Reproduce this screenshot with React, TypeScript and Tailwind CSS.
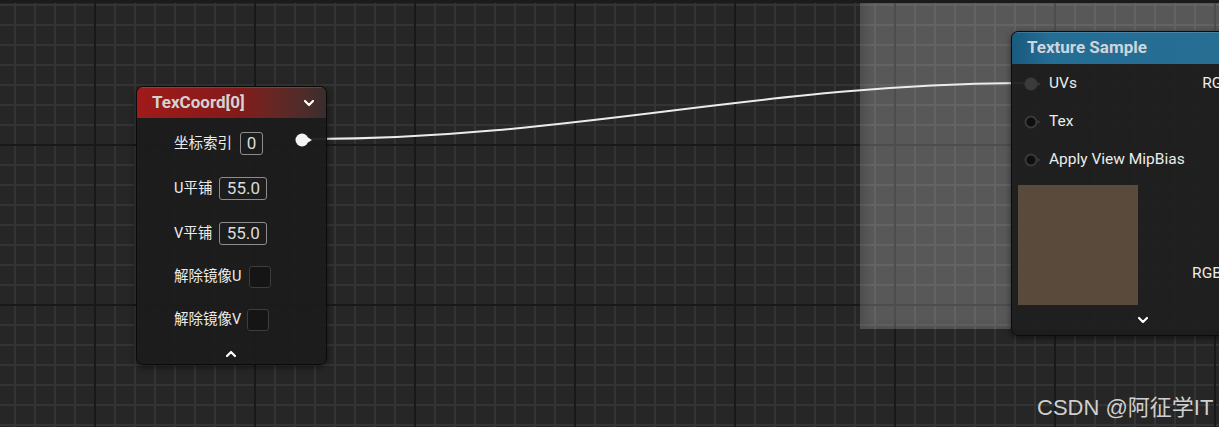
import React from 'react';
import { ChevronDown, ChevronUp } from 'lucide-react';

// --- Pins ---
function OutPin() {
  return (
    <svg width="18" height="14" viewBox="0 0 18 14">
      <circle cx="7" cy="7" r="6.5" fill="#f4f4f4" />
      <polygon points="13,4.5 17,7 13,9.5" fill="#f4f4f4" />
    </svg>
  );
}

function InPin({ connected = false }: { connected?: boolean }) {
  return (
    <svg width="18" height="14" viewBox="0 0 18 14">
      {connected ? (
        <circle cx="7" cy="7" r="6.5" fill="#3b3b3b" />
      ) : (
        <circle cx="7" cy="7" r="5.5" fill="#0e0e0e" stroke="#3a3a3a" strokeWidth="2" />
      )}
      <polygon points="13.5,5 16.5,7 13.5,9" fill={connected ? '#3b3b3b' : '#3a3a3a'} />
    </svg>
  );
}

function ValueBox({ value, wide = false }: { value: string; wide?: boolean }) {
  return (
    <div
      className={`flex h-[23px] items-center justify-center rounded-[3px] border border-[#8d8d8d] text-[17px] leading-none text-[#dcdcdc] ${
        wide ? 'w-[48px]' : 'w-[23px]'
      }`}
    >
      {value}
    </div>
  );
}

function CheckBox() {
  return <div className="h-[22px] w-[22px] rounded-[3px] border border-[#3d3d3d] bg-[#151515]" />;
}

// --- TexCoord node ---
function TexCoordNode() {
  return (
    <div className="absolute left-[136px] top-[86px] flex h-[279px] w-[191px] flex-col overflow-hidden rounded-[7px] border border-[#0b0b0b] bg-[#1b1c1b]/[0.94] shadow-[0_2px_6px_rgba(0,0,0,0.5)]">
      <div className="flex h-[31px] shrink-0 items-center justify-between bg-linear-to-r from-[#a11a1a] via-[#821a1a] via-55% to-[#3a2d2d] pl-[15px] pr-[9px] shadow-[inset_0_1px_0_rgba(255,255,255,0.12)]">
        <span className="text-[17px] font-bold text-[#d3d3d3]">TexCoord[0]</span>
        <ChevronDown size={16} strokeWidth={3.2} className="text-white" />
      </div>

      <div className="flex flex-col pl-[37px] pt-[3px] text-[14.5px] text-[#ececec]">
        <div className="flex h-[45px] items-center gap-[8px]">
          <span>坐标索引</span>
          <ValueBox value="0" />
          <div className="ml-auto mr-[13px] -mt-[7px] flex">
            <OutPin />
          </div>
        </div>
        <div className="flex h-[45px] items-center gap-[7px]">
          <span>U平铺</span>
          <ValueBox value="55.0" wide />
        </div>
        <div className="flex h-[45px] items-center gap-[7px]">
          <span>V平铺</span>
          <ValueBox value="55.0" wide />
        </div>
        <div className="flex h-[42px] items-center gap-[8px]">
          <span>解除镜像U</span>
          <CheckBox />
        </div>
        <div className="flex h-[43px] items-center gap-[6px]">
          <span>解除镜像V</span>
          <CheckBox />
        </div>
      </div>

      <div className="flex flex-1 items-start justify-center pr-[2px] pt-[5px]">
        <ChevronUp size={16} strokeWidth={3.2} className="text-white" />
      </div>
    </div>
  );
}

// --- Texture Sample node ---
const inputs = [
  { label: 'UVs', connected: true },
  { label: 'Tex', connected: false },
  { label: 'Apply View MipBias', connected: false },
];
const outputs = ['RGB', 'R', 'G', 'B', 'A', 'RGBA'];

function TextureSampleNode() {
  return (
    <div className="absolute left-[1011px] top-[31px] flex h-[305px] w-[260px] flex-col overflow-hidden rounded-[7px] border border-[#0b0b0b] bg-[#1b1c1b]/[0.95] shadow-[0_2px_6px_rgba(0,0,0,0.5)]">
      <div className="flex h-[32px] shrink-0 items-center bg-linear-to-r from-[#1a5a7e] via-[#246d95] via-15% to-[#286e92] pl-[15px] shadow-[inset_0_1px_0_rgba(255,255,255,0.15)]">
        <span className="text-[17px] font-bold text-[#cdd5dc]">Texture Sample</span>
      </div>

      <div className="flex flex-1 pt-[1px] text-[15.5px] text-[#ececec]">
        <div className="flex flex-col">
          {inputs.map((p) => (
            <div key={p.label} className="flex h-[38px] items-center gap-[7px] pl-[12px]">
              <InPin connected={p.connected} />
              <span>{p.label}</span>
            </div>
          ))}
          <div className="ml-[6px] mt-[6px] h-[120px] w-[120px] bg-[#5a4a3b]" />
        </div>
        <div className="ml-auto flex flex-col items-end pr-[38px]">
          {outputs.map((o) => (
            <div key={o} className="flex h-[38px] items-center">
              <span>{o}</span>
            </div>
          ))}
        </div>
      </div>

      <div className="flex h-[30px] shrink-0 items-center pl-[123px]">
        <ChevronDown size={16} strokeWidth={3.2} className="text-white" />
      </div>
    </div>
  );
}

export default function App() {
  return (
    <div className="relative h-[427px] w-[1219px] overflow-hidden bg-[#262626] font-[Roboto,'Noto_Sans_CJK_SC',sans-serif]">
      {/* grid */}
      <div className="absolute inset-0 bg-[image:linear-gradient(to_right,#343434_2px,transparent_2px),linear-gradient(to_bottom,#343434_2px,transparent_2px)] bg-[size:20px_20px] bg-[position:14px_4px]" />
      <div className="absolute inset-0 bg-[image:linear-gradient(to_right,#181818_2px,transparent_2px),linear-gradient(to_bottom,#181818_2px,transparent_2px)] bg-[size:160px_160px] bg-[position:94px_144px]" />

      {/* selection marquee */}
      <div className="absolute left-[860px] top-0 h-[329px] w-[400px] bg-white/[0.23] shadow-[inset_5px_-3px_6px_rgba(0,0,0,0.12)]" />

      {/* wire */}
      <svg className="absolute inset-0" width="1219" height="427">
        <path d="M312 139 C 572 139, 764 83, 1030 83" stroke="#ececec" strokeWidth="2" fill="none" />
      </svg>

      <TexCoordNode />
      <TextureSampleNode />

      <div className="absolute inset-x-0 top-0 h-[3px] bg-[#1b1b1b]" />

      <div className="absolute left-[1037px] top-[391px] font-['Liberation_Sans','Noto_Sans_CJK_SC',sans-serif] text-[22px] text-[#cfcfcf]">
        CSDN @阿征学IT
      </div>
    </div>
  );
}
